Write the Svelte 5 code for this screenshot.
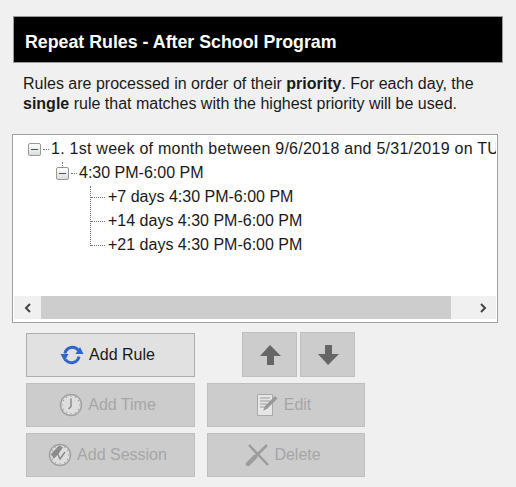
<script lang="ts">
  const rows = [
    { depth: 0, toggle: true, label: "1. 1st week of month between 9/6/2018 and 5/31/2019 on TU" },
    { depth: 1, toggle: true, label: "4:30 PM-6:00 PM" },
    { depth: 2, toggle: false, label: "+7 days 4:30 PM-6:00 PM" },
    { depth: 2, toggle: false, label: "+14 days 4:30 PM-6:00 PM" },
    { depth: 2, toggle: false, label: "+21 days 4:30 PM-6:00 PM" },
  ];
  const ticks = [0, 30, 60, 90, 120, 150, 180, 210, 240, 270, 300, 330];
</script>

{#snippet clockFace()}
  <circle cx="12" cy="12" r="10.5" fill="#dedede" stroke="#a2a2a2" stroke-width="1.5" />
  {#each ticks as t}
    <path d="M12 2.5v1.5" stroke="#a0a0a0" transform="rotate({t} 12 12)" />
  {/each}
{/snippet}

<div class="page">
  <div class="header">Repeat Rules - After School Program</div>
  <p class="intro">
    Rules are processed in order of their <b>priority</b>. For each day, the<br />
    <b>single</b> rule that matches with the highest priority will be used.
  </p>

  <div class="list">
    <div class="tree">
      {#each rows as row}
        <div class="row depth{row.depth}">
          {#if row.toggle}
            <span class="toggle"><span class="minus"></span></span>
          {/if}
          <span class="dots"></span>
          <span class="label">{row.label}</span>
        </div>
      {/each}
      <span class="vline one"></span>
      <span class="vline two"></span>
    </div>
    <div class="scrollbar">
      <span class="end">
        <svg width="10" height="10" viewBox="0 0 10 10"><path d="M7 1 3 5l4 4" fill="none" stroke="#444" stroke-width="2" /></svg>
      </span>
      <span class="thumb"></span>
      <span class="track"></span>
      <span class="end">
        <svg width="10" height="10" viewBox="0 0 10 10"><path d="M3 1l4 4-4 4" fill="none" stroke="#444" stroke-width="2" /></svg>
      </span>
    </div>
  </div>

  <div class="actions">
    <button type="button" class="btn primary">
      <svg width="24" height="24" viewBox="0 0 24 24">
        <path d="M5 10.5A7.5 7.5 0 0 1 18.5 7.5" fill="none" stroke="#2f66c8" stroke-width="3" />
        <path d="M15.5 11h8L20 4z" fill="#2f66c8" />
        <path d="M19 13.5A7.5 7.5 0 0 1 5.5 16.5" fill="none" stroke="#2f66c8" stroke-width="3" />
        <path d="M.5 11h8l-4 7.5z" fill="#2f66c8" />
      </svg>
      Add Rule
    </button>
    <div class="arrows">
      <button type="button" class="btn arrow" aria-label="Move up">
        <svg width="22" height="22" viewBox="0 0 22 22"><path d="M11 1 22 12h-7v9H8v-9H1z" fill="#666" /></svg>
      </button>
      <button type="button" class="btn arrow" aria-label="Move down">
        <svg width="22" height="22" viewBox="0 0 22 22"><path d="M8 1h7v9h7L11 21 1 10h7z" fill="#666" /></svg>
      </button>
    </div>
    <button type="button" class="btn">
      <svg width="24" height="24" viewBox="0 0 24 24">
        {@render clockFace()}
        <path d="M12 5.5v8l-2.5 2.5" fill="none" stroke="#8c8c8c" stroke-width="1.5" />
      </svg>
      Add Time
    </button>
    <button type="button" class="btn">
      <svg width="24" height="24" viewBox="0 0 24 24">
        <path d="M2.5 1.5h15v21h-15z" fill="#e6e6e6" stroke="#aaa" />
        <path d="M5 5h10M5 8h10M5 11h7M5 14h5" stroke="#9a9a9a" />
        <path d="M8 18l2-5 10-10 2.5 2.5-10 10z" fill="#999" />
      </svg>
      Edit
    </button>
    <button type="button" class="btn">
      <svg width="24" height="24" viewBox="0 0 24 24">
        {@render clockFace()}
        <path d="M3 11 11 2.5l4 2-5 7-4 4z" fill="#8c8c8c" />
        <path d="M5 15l4-6 3 7 5-7" fill="none" stroke="#8c8c8c" stroke-width="1.5" />
      </svg>
      Add Session
    </button>
    <button type="button" class="btn">
      <svg width="24" height="24" viewBox="0 0 24 24">
        <path d="M4 2 23 22" stroke="#9c9c9c" stroke-width="2.5" />
        <path d="M22 2 10 14" stroke="#9c9c9c" stroke-width="2.5" />
        <path d="M10 14 3 21" stroke="#9c9c9c" stroke-width="4.5" stroke-linecap="round" />
      </svg>
      Delete
    </button>
  </div>
</div>

<style>
  :global(body) {
    margin: 0;
    background: #f0f0f0;
  }
  .page {
    width: 516px;
    height: 487px;
    padding-top: 16px;
    box-sizing: border-box;
    overflow: hidden;
    font-family: "Liberation Sans", Arial, sans-serif;
    color: #1a1a1a;
  }
  .header {
    margin-left: 13px;
    width: 490px;
    height: 47px;
    box-sizing: border-box;
    padding: 15px 0 0 11px;
    background: #000;
    border: 1px solid #999;
    color: #fff;
    font-size: 17.8px;
    font-weight: bold;
    line-height: 20px;
    white-space: nowrap;
  }
  .intro {
    margin: 11px 0 0 23px;
    font-size: 16px;
    line-height: 19.5px;
    white-space: nowrap;
  }
  .list {
    margin: 21px 0 0 12px;
    width: 486px;
    height: 189px;
    box-sizing: border-box;
    border: 1px solid #a0a0a0;
    background: #fff;
    display: flex;
    flex-direction: column;
    padding: 0 1px 3px;
  }
  .tree {
    position: relative;
    flex: 1;
    overflow: hidden;
    padding-top: 2px;
    font-size: 16px;
  }
  .row {
    height: 24px;
    display: flex;
    align-items: center;
    white-space: nowrap;
  }
  .depth0 {
    padding-left: 14px;
    letter-spacing: 0.25px;
  }
  .depth1 { padding-left: 42px; }
  .depth2 { padding-left: 77px; }
  .toggle {
    width: 13px;
    height: 13px;
    box-sizing: border-box;
    border: 1px solid #999;
    border-radius: 2px;
    background: linear-gradient(#fff, #ddd);
    display: flex;
    align-items: center;
    justify-content: center;
    flex: none;
  }
  .minus {
    width: 7px;
    height: 1px;
    background: #3850a0;
  }
  .dots {
    width: 6px;
    margin: 0 2px;
    border-top: 1px dotted #777;
    flex: none;
  }
  .depth2 .dots {
    width: 14px;
    margin: 0 3px 0 0;
  }
  .vline {
    position: absolute;
    border-left: 1px dotted #777;
  }
  .vline.one {
    left: 48px;
    top: 27px;
    height: 6px;
  }
  .vline.two {
    left: 76px;
    top: 51px;
    height: 60px;
  }
  .scrollbar {
    height: 23px;
    flex: none;
    display: flex;
    align-items: center;
    background: #f0f0f0;
  }
  .end {
    width: 27px;
    height: 23px;
    flex: none;
    display: flex;
    align-items: center;
    justify-content: center;
  }
  .thumb {
    height: 23px;
    width: 410px;
    flex: none;
    background: #cdcdcd;
  }
  .track {
    flex: 1;
  }
  .actions {
    margin: 10px 0 0 26px;
    display: grid;
    grid-template-columns: 169px 158px;
    grid-auto-rows: 44px;
    column-gap: 12px;
    row-gap: 6px;
  }
  .arrows {
    display: flex;
    gap: 3px;
    margin-left: 35px;
    margin-top: -1px;
  }
  .btn {
    display: flex;
    align-items: center;
    justify-content: center;
    gap: 5px;
    padding: 0 6px 0 0;
    box-sizing: border-box;
    width: 100%;
    border: 1px solid #bfbfbf;
    background: #cccccc;
    color: #a6a6a6;
    font: 16px "Liberation Sans", Arial, sans-serif;
  }
  .btn.primary {
    background: #e1e1e1;
    border: 1px solid #adadad;
    color: #1a1a1a;
  }
  .btn.arrow {
    width: 55px;
    padding: 0;
  }
</style>
